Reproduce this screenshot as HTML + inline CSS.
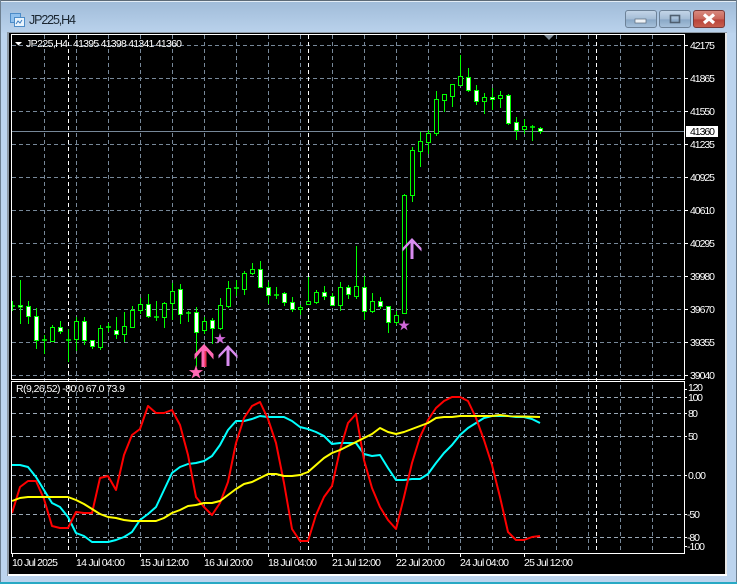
<!DOCTYPE html>
<html><head><meta charset="utf-8"><title>JP225,H4</title>
<style>
html,body{margin:0;padding:0;width:737px;height:584px;overflow:hidden;background:#bcd4ee}
svg{display:block}
text{font-family:"Liberation Sans",sans-serif;font-size:10.5px;fill:#fff}
</style></head><body>
<svg width="737" height="584" viewBox="0 0 737 584" xmlns="http://www.w3.org/2000/svg">
<defs>
<linearGradient id="tb" x1="0" y1="0" x2="0" y2="1"><stop offset="0" stop-color="#9fbbd8"/><stop offset="1" stop-color="#bad2ec"/></linearGradient>
<linearGradient id="bt" x1="0" y1="0" x2="0" y2="1"><stop offset="0" stop-color="#c4d6e8"/><stop offset=".5" stop-color="#a5bdd6"/><stop offset=".55" stop-color="#8aa8c6"/><stop offset="1" stop-color="#a8c2dc"/></linearGradient>
<linearGradient id="cl" x1="0" y1="0" x2="0" y2="1"><stop offset="0" stop-color="#d98a80"/><stop offset=".5" stop-color="#c9675b"/><stop offset=".55" stop-color="#b8443a"/><stop offset="1" stop-color="#c9604f"/></linearGradient>
<clipPath id="main"><rect x="12" y="35" width="672" height="344"/></clipPath>
<polygon id="st" points="0,-1 .224,-.309 .951,-.309 .363,.118 .588,.809 0,.382 -.588,.809 -.363,.118 -.951,-.309 -.224,-.309"/>
<path id="ar" d="M228 345L237.500 355V358.500L229.500 350V366H226.500V350L218.500 358.500V355Z"/>
</defs>

<!-- window frame -->
<rect width="737" height="584" fill="#bcd4ee"/>
<rect width="737" height="33" fill="url(#tb)"/>
<rect width="737" height="1" fill="#5d6b78"/>
<rect y="1" width="737" height="1" fill="#e3edf6"/>
<rect width="1" height="584" fill="#6d7f90"/>
<rect x="736" width="1" height="584" fill="#6d7f90"/>
<rect y="582" width="737" height="2" fill="#28a9c4"/>
<rect x="7" y="32" width="720" height="544" fill="#8c98a4"/>
<rect x="725" y="33" width="2" height="543" fill="#e6e6e6"/>
<rect x="8" y="574" width="719" height="2" fill="#fff"/>
<rect x="9" y="33" width="716" height="541" fill="#000"/>

<!-- title icon -->
<rect x="10.500" y="13.500" width="10" height="9" fill="#8fc0ee" stroke="#4d8cc8"/>
<rect x="14.500" y="17.500" width="10" height="9" fill="#e8f3fc" stroke="#4d8cc8"/>
<path d="M16 24l2-3 2 2 2-3" fill="none" stroke="#3b7cc0"/>
<text x="29" y="24" style="font-size:12.5px;fill:#1a2530" textLength="47" lengthAdjust="spacing">JP225,H4</text>

<!-- buttons -->
<rect x="625.500" y="10.500" width="31" height="17" rx="2.500" fill="url(#bt)" stroke="#6d8298"/>
<rect x="635" y="19" width="11" height="4" fill="#eef2f6" stroke="#59697a" stroke-width=".7"/>
<rect x="659.500" y="10.500" width="31" height="17" rx="2.500" fill="url(#bt)" stroke="#6d8298"/>
<rect x="670.500" y="15.500" width="9" height="7" fill="none" stroke="#4f5f70" stroke-width="1.600"/>
<rect x="693.500" y="10.500" width="31" height="17" rx="2.500" fill="url(#cl)" stroke="#7a3a38"/>
<path d="M704 14.500L714 23M714 14.500L704 23" stroke="#fff" stroke-width="3.200"/>

<!-- grid -->
<g stroke="#778899" stroke-dasharray="4 3" fill="none">
<path d="M12 45.500H684M12 78.500H684M12 111.500H684M12 144.500H684M12 177.500H684M12 210.500H684M12 243.500H684M12 276.500H684M12 309.500H684M12 342.500H684M12 375.500H684"/>
<path d="M12 397.500H684M12 413.500H684M12 436.500H684M12 475.500H684M12 514.500H684M12 537.500H684" stroke="#9aa8b6"/>
<path d="M44.500 35V553M76.500 35V553M108.500 35V553M140.500 35V553M172.500 35V553M204.500 35V553M236.500 35V553M268.500 35V553M300.500 35V553M332.500 35V553M364.500 35V553M396.500 35V553M428.500 35V553M460.500 35V553M492.500 35V553M524.500 35V553M556.500 35V553M588.500 35V553M620.500 35V553M652.500 35V553"/>
<path d="M68.500 35V553M308.500 35V553M596.500 35V553" stroke="#fff"/>
</g>

<!-- current price line -->
<path d="M12 131.500H684" stroke="#778899"/>

<!-- candles -->
<g clip-path="url(#main)">
<path stroke="#00ff00" fill="none" d="M12.500 301V311M20.500 280V324M28.500 301V324M36.500 308V349M44.500 335V354M52.500 325V342M60.500 321V334M68.500 329V362M76.500 317V351M84.500 317V345M92.500 340V349M100.500 325V350M108.500 323V332M116.500 317V339M124.500 312V342M132.500 306V328M140.500 298V314M148.500 294V318M156.500 301V321M164.500 302V328M172.500 283V320M180.500 284V324M188.500 311V322M196.500 307V367M204.500 317V334M212.500 318V344M220.500 298V330M228.500 281V308M236.500 280V296M244.500 271V295M252.500 263V275M260.500 261V288M268.500 282V304M276.500 287V299M284.500 292V306M292.500 297V312M300.500 305V315M308.500 277V305M316.500 290V304M324.500 286V300M332.500 293V306M340.500 282V311M348.500 285V299M356.500 246V299M364.500 276V320M372.500 293V313M380.500 297V309M388.500 306V333M396.500 311V325M404.500 194V313M412.500 147V202M420.500 132V167M428.500 130V154M436.500 91V136M444.500 94V112M452.500 84V107M460.500 55V86M468.500 68V92M476.500 85V105M484.500 93V114M492.500 88V110M500.500 91V108M508.500 94V125M516.500 117V140M524.500 119V134M532.500 125V141M540.500 127V134"/>
<path stroke="#00ff00" stroke-width="1.600" fill="none" d="M10 306H15M18 306H23M42 340H47M66 340H71M106 327H111M154 317H159M186 313H191M234 288H239M274 295H279M530 127H535"/>
<g fill="#fff" stroke="#00ff00">
<rect x="18.500" y="305.500" width="4" height="1.500"/>
<rect x="26.500" y="306.500" width="4" height="10"/>
<rect x="34.500" y="316.500" width="4" height="24"/>
<rect x="58.500" y="327.500" width="4" height="4"/>
<rect x="82.500" y="321.500" width="4" height="19"/>
<rect x="90.500" y="340.500" width="4" height="6"/>
<rect x="114.500" y="330.500" width="4" height="4"/>
<rect x="146.500" y="304.500" width="4" height="12"/>
<rect x="178.500" y="289.500" width="4" height="25"/>
<rect x="194.500" y="312.500" width="4" height="20"/>
<rect x="210.500" y="320.500" width="4" height="8"/>
<rect x="258.500" y="269.500" width="4" height="18"/>
<rect x="266.500" y="287.500" width="4" height="8"/>
<rect x="282.500" y="293.500" width="4" height="9"/>
<rect x="290.500" y="302.500" width="4" height="7"/>
<rect x="322.500" y="292.500" width="4" height="4"/>
<rect x="330.500" y="296.500" width="4" height="9"/>
<rect x="346.500" y="287.500" width="4" height="7"/>
<rect x="362.500" y="287.500" width="4" height="24"/>
<rect x="378.500" y="301.500" width="4" height="5"/>
<rect x="386.500" y="306.500" width="4" height="16"/>
<rect x="466.500" y="77.500" width="4" height="13"/>
<rect x="474.500" y="90.500" width="4" height="11"/>
<rect x="490.500" y="97.500" width="4" height="2"/>
<rect x="506.500" y="95.500" width="4" height="28"/>
<rect x="514.500" y="122.500" width="4" height="8"/>
<rect x="538.500" y="128.500" width="4" height="3"/>
</g>
<g fill="#000" stroke="#00ff00">
<rect x="50.500" y="327.500" width="4" height="14"/>
<rect x="74.500" y="321.500" width="4" height="18"/>
<rect x="98.500" y="328.500" width="4" height="19"/>
<rect x="122.500" y="326.500" width="4" height="8"/>
<rect x="130.500" y="310.500" width="4" height="17"/>
<rect x="138.500" y="304.500" width="4" height="6"/>
<rect x="162.500" y="303.500" width="4" height="14"/>
<rect x="170.500" y="291.500" width="4" height="12"/>
<rect x="202.500" y="321.500" width="4" height="9"/>
<rect x="218.500" y="305.500" width="4" height="23"/>
<rect x="226.500" y="288.500" width="4" height="18"/>
<rect x="242.500" y="273.500" width="4" height="16"/>
<rect x="250.500" y="269.500" width="4" height="4"/>
<rect x="298.500" y="307.500" width="4" height="2"/>
<rect x="306.500" y="301.500" width="4" height="3"/>
<rect x="314.500" y="292.500" width="4" height="10"/>
<rect x="338.500" y="287.500" width="4" height="18"/>
<rect x="354.500" y="286.500" width="4" height="10"/>
<rect x="370.500" y="301.500" width="4" height="10"/>
<rect x="394.500" y="315.500" width="4" height="7"/>
<rect x="402.500" y="195.500" width="4" height="118"/>
<rect x="410.500" y="150.500" width="4" height="45"/>
<rect x="418.500" y="141.500" width="4" height="10"/>
<rect x="426.500" y="133.500" width="4" height="9"/>
<rect x="434.500" y="99.500" width="4" height="34"/>
<rect x="442.500" y="94.500" width="4" height="6"/>
<rect x="450.500" y="84.500" width="4" height="12"/>
<rect x="458.500" y="76.500" width="4" height="9"/>
<rect x="482.500" y="97.500" width="4" height="4"/>
<rect x="498.500" y="95.500" width="4" height="3"/>
<rect x="522.500" y="126.500" width="4" height="3"/>
</g>
</g>

<!-- arrows and stars -->
<path d="M204 344L213.500 354V359.500L206.500 351V367H201.500V351L194.500 359.500V354Z" fill="#ff69b4"/>
<path d="M204.500 351H206.500V367H204.500Z" fill="#e8304f"/>
<use href="#ar" fill="#d98cf0"/>
<use href="#ar" fill="#d98cf0" transform="translate(184 -107)"/>
<use href="#st" fill="#ff69b4" transform="translate(196 372.500) scale(7.500)"/>
<use href="#st" fill="#d068d8" transform="translate(220 339) scale(6)"/>
<use href="#st" fill="#d068d8" transform="translate(404 325.500) scale(6)"/>

<!-- indicator lines -->
<g fill="none" stroke-width="2" stroke-linejoin="round">
<polyline stroke="#00ffff" points="12,465 20,465 28,467 36,477 44,490 52,503 60,507 68,517 76,533 84,536 92,542 100,542 108,542 116,540 124,537 132,532 140,520 148,514 156,507 164,490 172,473 180,467 188,464 196,463 204,461 212,456 220,445 228,430 236,421 244,421 252,419 260,416 268,417 276,417 284,417 292,421 300,427 308,429 316,432 324,436 332,444 340,443 348,443 356,443 364,454 372,456 380,455 388,468 396,480 404,480 412,479 420,479 428,474 436,463 444,453 452,445 460,435 468,428 476,423 484,418 492,416 500,416 508,416 516,417 524,417 532,419 540,423"/>
<polyline stroke="#ff0000" points="12,513 20,487 28,481 36,481 44,499 52,526 60,528 68,528 76,512 84,513 92,513 100,478 108,476 116,490 124,455 132,435 140,429 148,406 156,413 164,413 172,410 180,425 188,455 196,497 204,507 212,515 220,503 228,482 236,443 244,418 252,406 260,402 268,419 276,443 284,483 292,529 300,541 308,541 316,515 324,497 332,486 340,450 348,423 356,414 364,460 372,488 380,507 388,520 396,529 404,497 412,463 420,437 428,420 436,408 444,401 452,397 460,397 468,401 476,418 484,440 492,465 500,497 508,532 516,540 524,540 532,537 540,536"/>
<polyline stroke="#ffff00" points="12,501 20,498 28,497 36,497 68,497 76,500 84,504 92,509 100,514 108,517 116,518 124,520 132,521 156,521 164,518 172,513 180,510 188,506 196,505 204,503 212,503 220,501 228,495 236,489 244,484 252,482 260,478 268,474 276,474 284,476 292,476 300,475 308,472 316,465 324,458 332,453 340,450 348,446 356,442 364,438 372,434 380,428 388,432 396,434 404,432 412,429 420,426 428,423 436,418 444,417 452,417 460,416 492,416 500,415 508,416 540,417"/>
</g>

<!-- frames -->
<g fill="none" stroke="#fff">
<path d="M11.500 34.500H684.500V379.500H11.500Z"/>
<path d="M11.500 381.500H684.500V553.500H11.500Z"/>
</g>

<!-- top marker -->
<path d="M544 35H554L549 40Z" fill="#7f8c98"/>

<!-- legend -->
<path d="M15 42H22L18.500 45.500Z" fill="#fff"/>
<text x="26" y="47" textLength="42" lengthAdjust="spacing">JP225,H4</text>
<text x="73" y="47" textLength="109" lengthAdjust="spacing">41395 41398 41341 41360</text>
<text x="16" y="392" textLength="109" lengthAdjust="spacing">R(9,26,52) -80.0 67.0 73.9</text>

<!-- price axis -->
<path d="M684 45.500H688M684 78.500H688M684 111.500H688M684 144.500H688M684 177.500H688M684 210.500H688M684 243.500H688M684 276.500H688M684 309.500H688M684 342.500H688M684 375.500H688M684 389.500H687M684 397.500H687M684 413.500H687M684 436.500H687M684 475.500H687M684 514.500H687M684 537.500H687M684 546.500H687" stroke="#fff"/>
<g>
<text x="690" y="49" textLength="25" lengthAdjust="spacing">42175</text>
<text x="690" y="82" textLength="25" lengthAdjust="spacing">41865</text>
<text x="690" y="115" textLength="25" lengthAdjust="spacing">41550</text>
<text x="690" y="148" textLength="25" lengthAdjust="spacing">41235</text>
<text x="690" y="181" textLength="25" lengthAdjust="spacing">40925</text>
<text x="690" y="214" textLength="25" lengthAdjust="spacing">40610</text>
<text x="690" y="247" textLength="25" lengthAdjust="spacing">40295</text>
<text x="690" y="280" textLength="25" lengthAdjust="spacing">39980</text>
<text x="690" y="313" textLength="25" lengthAdjust="spacing">39670</text>
<text x="690" y="346" textLength="25" lengthAdjust="spacing">39355</text>
<text x="690" y="379" textLength="25" lengthAdjust="spacing">39040</text>
<text x="688" y="391" textLength="15" lengthAdjust="spacing">120</text>
<text x="688" y="401" textLength="15" lengthAdjust="spacing">100</text>
<text x="688" y="417" textLength="10" lengthAdjust="spacing">80</text>
<text x="688" y="440" textLength="10" lengthAdjust="spacing">50</text>
<text x="688" y="479" textLength="18" lengthAdjust="spacing">0.00</text>
<text x="687" y="518" textLength="13" lengthAdjust="spacing">-50</text>
<text x="687" y="541" textLength="13" lengthAdjust="spacing">-80</text>
<text x="687" y="550" textLength="18" lengthAdjust="spacing">-100</text>
</g>
<rect x="686" y="126" width="32" height="11" fill="#fff"/>
<text x="690" y="135" style="fill:#000" textLength="25" lengthAdjust="spacing">41360</text>

<!-- time axis -->
<path d="M12.500 553V557M76.500 553V557M140.500 553V557M204.500 553V557M268.500 553V557M332.500 553V557M396.500 553V557M460.500 553V557M524.500 553V557" stroke="#fff"/>
<g>
<text x="12" y="566" textLength="46" lengthAdjust="spacing">10 Jul 2025</text>
<text x="76" y="566" textLength="49" lengthAdjust="spacing">14 Jul 04:00</text>
<text x="140" y="566" textLength="49" lengthAdjust="spacing">15 Jul 12:00</text>
<text x="204" y="566" textLength="49" lengthAdjust="spacing">16 Jul 20:00</text>
<text x="268" y="566" textLength="49" lengthAdjust="spacing">18 Jul 04:00</text>
<text x="332" y="566" textLength="49" lengthAdjust="spacing">21 Jul 12:00</text>
<text x="396" y="566" textLength="49" lengthAdjust="spacing">22 Jul 20:00</text>
<text x="460" y="566" textLength="49" lengthAdjust="spacing">24 Jul 04:00</text>
<text x="524" y="566" textLength="49" lengthAdjust="spacing">25 Jul 12:00</text>
</g>
</svg>
</body></html>
